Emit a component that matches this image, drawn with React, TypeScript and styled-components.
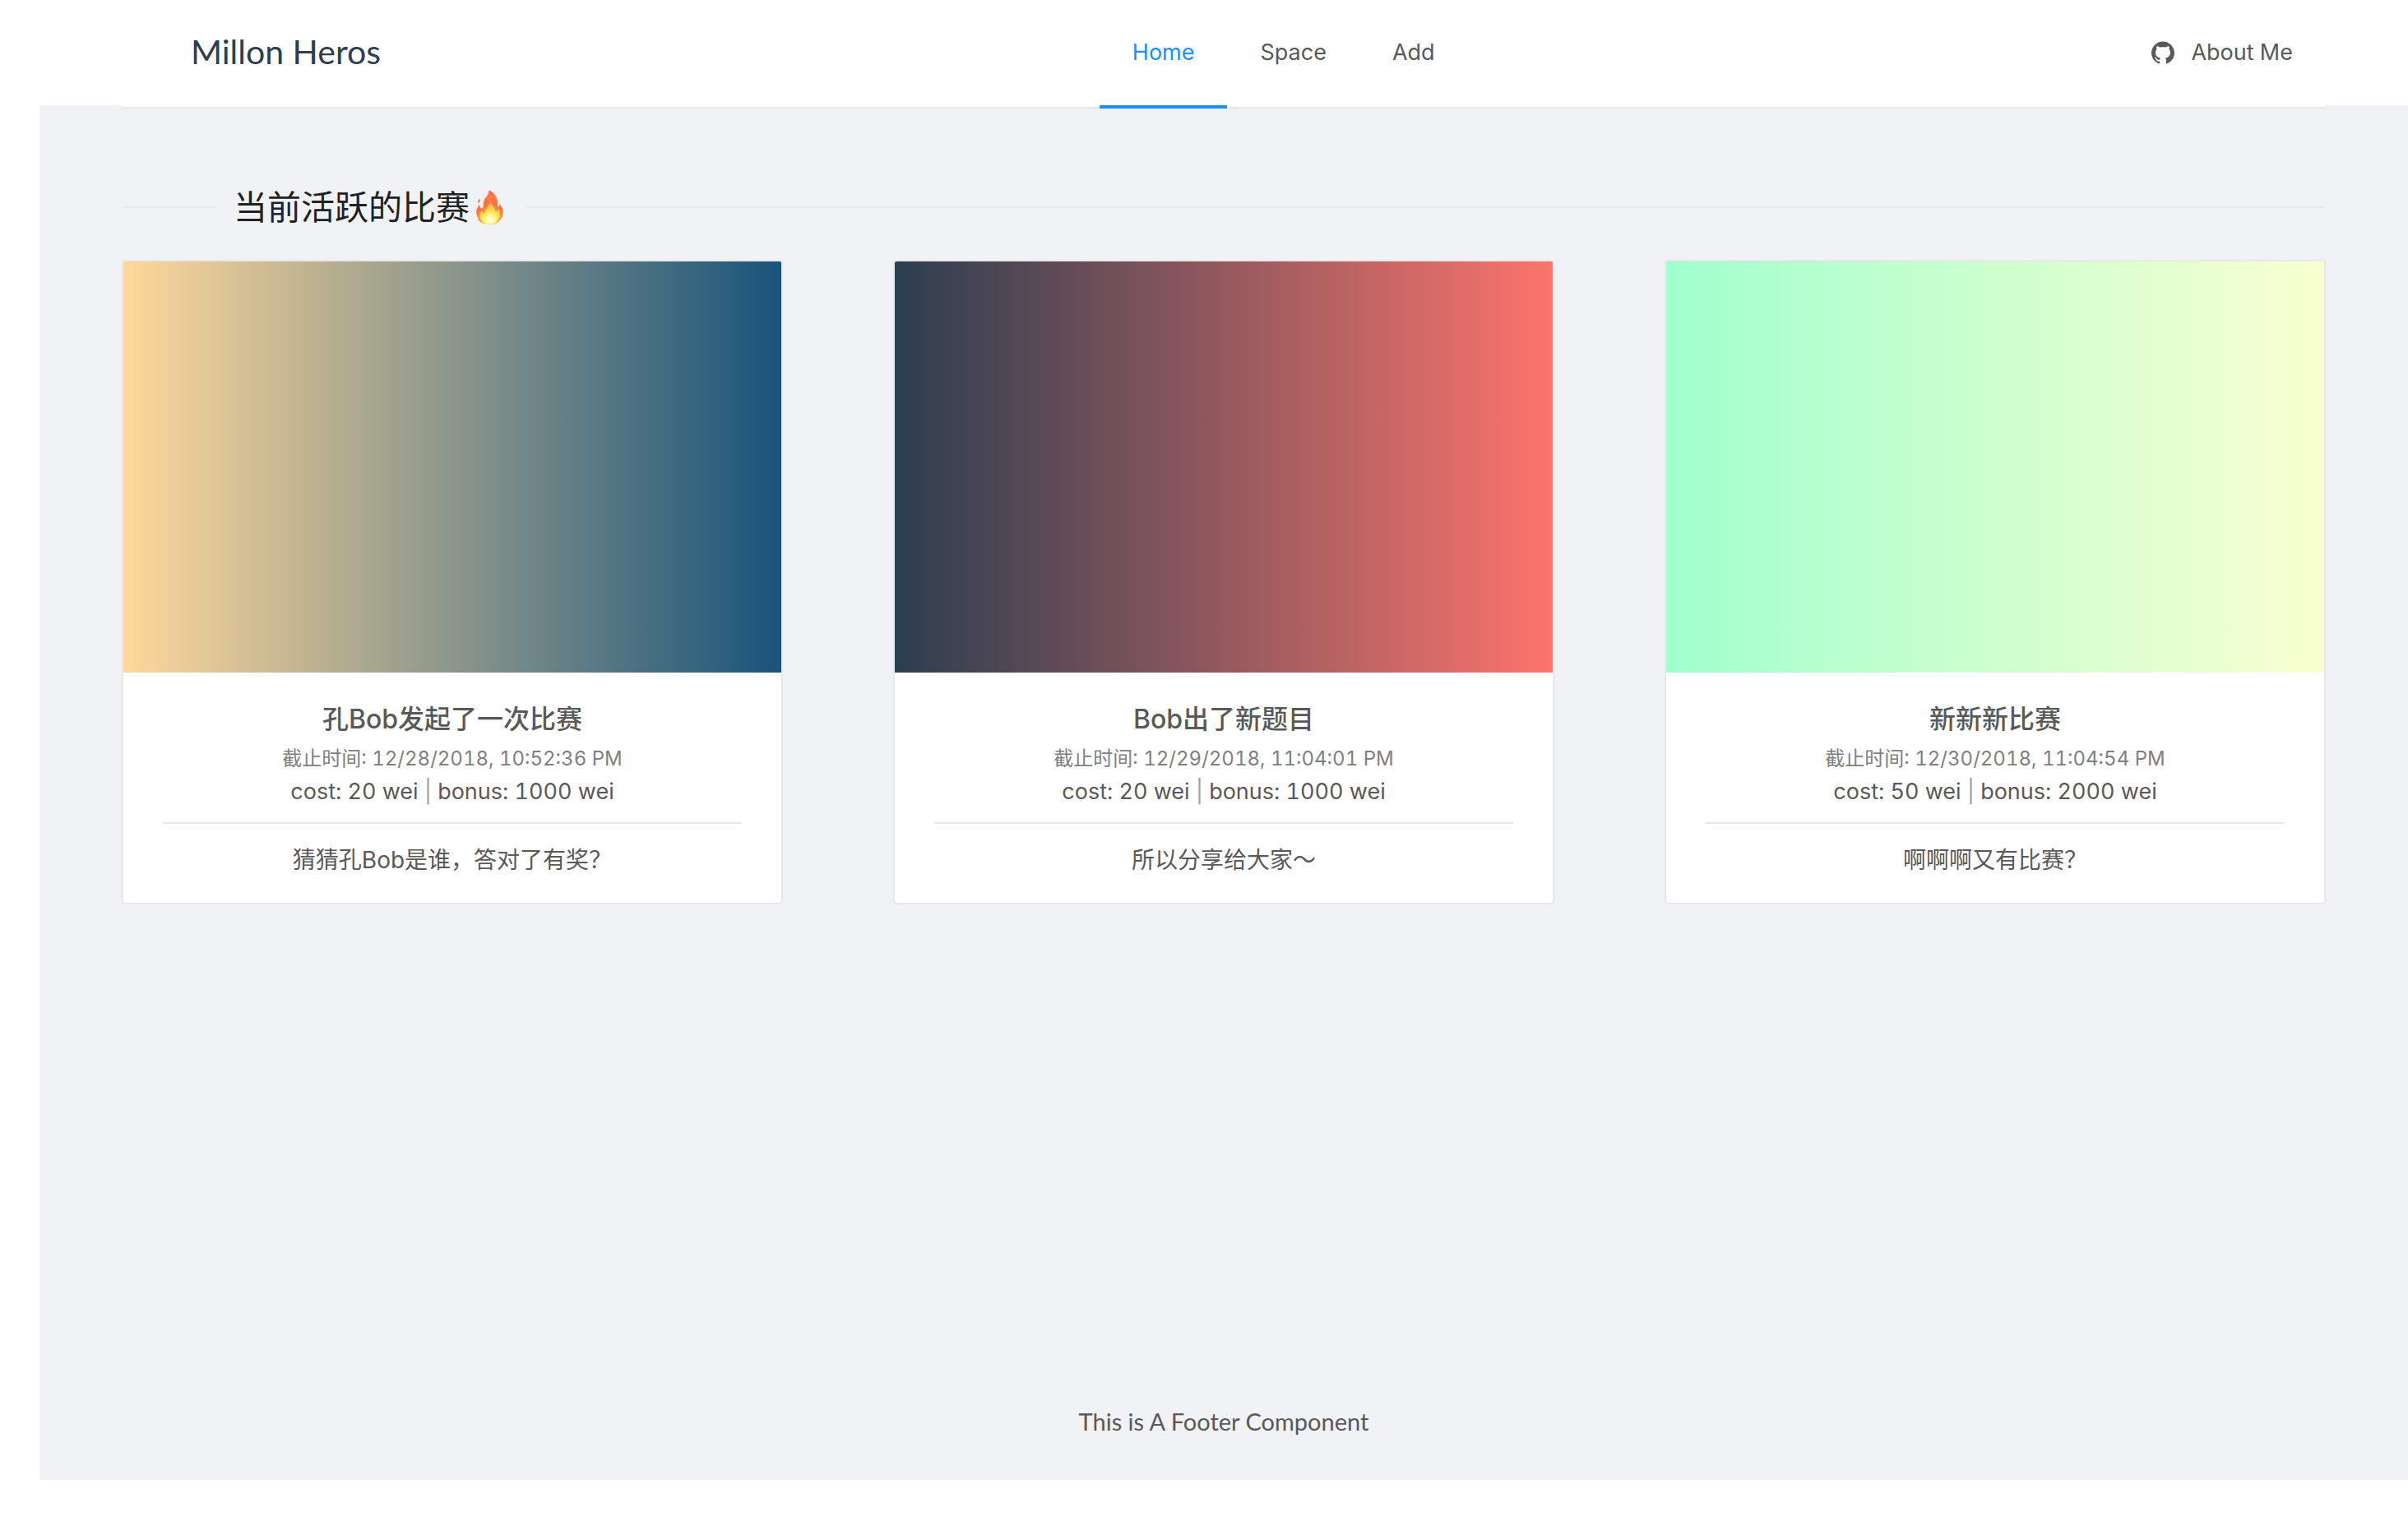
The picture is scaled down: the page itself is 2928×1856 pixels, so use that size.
import React from "react";
import styled, { createGlobalStyle } from "styled-components";
import { AiFillGithub } from "react-icons/ai";

const sans = `Inter, "Noto Sans CJK SC", "Liberation Sans", sans-serif`;

const GlobalStyle = createGlobalStyle`
  *, *::before, *::after { box-sizing: border-box; }
  body {
    margin: 0;
    background: #fff;
    color: #595959;
    font: 28px/42px ${sans};
    font-variant-numeric: tabular-nums;
  }
  h1, h2, h3, p { margin: 0; font-weight: 400; }
  a { color: inherit; text-decoration: none; }
`;

const Page = styled.div`
  display: flex;
  flex-direction: column;
  min-height: 100vh;
  padding-bottom: 56px;
`;

const Header = styled.header`
  height: 128px;
  padding: 0 100px 0 148px;
  background: #fff;
`;

const Menu = styled.div`
  position: relative;
  display: flex;
  justify-content: space-between;
  height: 132px;
  background: #fff;
  border-bottom: 2px solid #e8e8e8;
`;

const Logo = styled.h1`
  padding: 0 84px;
  color: #2c3e50;
  font: 400 41px/126px Lato, sans-serif;
`;

const Nav = styled.nav`
  display: flex;
`;

const NavLink = styled.a<{ $active?: boolean }>`
  display: flex;
  align-items: center;
  gap: 18px;
  height: 132px;
  padding: 0 40px;
  border-bottom: 4px solid ${(p) => (p.$active ? "#1890ff" : "transparent")};
  color: ${(p) => (p.$active ? "#1890ff" : "#595959")};
  font-size: 27px;
`;

const Main = styled.main`
  display: flex;
  flex: 1;
  flex-direction: column;
  margin-left: 48px;
  padding: 92px 100px 50px;
  background: #f0f2f5;
`;

const SectionTitle = styled.h2`
  display: flex;
  align-items: center;
  gap: 22px;
  margin-bottom: 32px;
  color: #222;
  font-size: 41px;
  line-height: 64px;

  &::before,
  &::after {
    content: "";
    height: 2px;
    background: #e8e8e8;
  }
  &::before { width: 114px; }
  &::after { flex: 1; }
`;

const TitleText = styled.span`
  display: flex;
  align-items: center;
  gap: 8px;
  padding-right: 6px;
`;

const CardGrid = styled.section`
  display: grid;
  grid-template-columns: repeat(3, 30%);
  justify-content: space-between;
`;

const Card = styled.article`
  overflow: hidden;
  background: #fff;
  border: 2px solid #e8e8e8;
  border-radius: 4px;
  text-align: center;
`;

const Cover = styled.div<{ $from: string; $to: string }>`
  height: 500px;
  background: linear-gradient(to right, ${(p) => p.$from}, ${(p) => p.$to});
`;

const CardBody = styled.div`
  padding: 32px 48px;
`;

const CardTitle = styled.h3`
  font-size: 32px;
  font-weight: 500;
  line-height: 50px;
`;

const Deadline = styled.p`
  color: #808080;
  font-size: 24px;
  line-height: 46px;
`;

const Stakes = styled.p`
  font-size: 27px;
  line-height: 34px;
`;

const Bar = styled.span`
  color: #a89c9c;
`;

const Rule = styled.hr`
  height: 2px;
  margin: 20px 0 24px;
  border: 0;
  background: #e8e8e8;
`;

const Description = styled.p`
  line-height: 40px;
`;

const Footer = styled.footer`
  margin-top: auto;
  font-family: Lato, sans-serif;
  font-size: 29px;
  text-align: center;
`;

interface Contest {
  title: string;
  deadline: string;
  cost: number;
  bonus: number;
  description: string;
  from: string;
  to: string;
}

const contests: Contest[] = [
  { title: "孔Bob发起了一次比赛", deadline: "12/28/2018, 10:52:36 PM", cost: 20, bonus: 1000, description: "猜猜孔Bob是谁，答对了有奖？", from: "#ffd89b", to: "#19547b" },
  { title: "Bob出了新题目", deadline: "12/29/2018, 11:04:01 PM", cost: 20, bonus: 1000, description: "所以分享给大家～", from: "#2c3e50", to: "#fd746c" },
  { title: "新新新比赛", deadline: "12/30/2018, 11:04:54 PM", cost: 50, bonus: 2000, description: "啊啊啊又有比赛？", from: "#a1ffce", to: "#faffd1" },
];

function Flame() {
  return (
    <svg width="33" height="42" viewBox="0 0 33 42" role="img" aria-label="fire">
      <defs>
        <radialGradient id="flame-outer" gradientUnits="userSpaceOnUse" cx="17" cy="36" r="36">
          <stop offset="0" stopColor="#ffe94f" />
          <stop offset="0.3" stopColor="#ffae38" />
          <stop offset="0.5" stopColor="#ff7040" />
          <stop offset="0.8" stopColor="#ff7a4a" />
          <stop offset="1" stopColor="#f8604a" />
        </radialGradient>
        <radialGradient id="flame-inner" gradientUnits="userSpaceOnUse" cx="17" cy="37" r="24">
          <stop offset="0" stopColor="#fffff0" />
          <stop offset="0.25" stopColor="#fff88a" />
          <stop offset="0.5" stopColor="#ffe04c" />
          <stop offset="0.8" stopColor="#ffb552" />
          <stop offset="1" stopColor="#ff9a55" stopOpacity="0" />
        </radialGradient>
      </defs>
      <path fill="url(#flame-outer)" d="M15.5 0C21 3 26 8 26 14.500C26 17 25.500 19 26.500 21C27.800 20.500 28.500 19 28.500 17C31 19.500 33 24 32.500 29C32 35.500 27 41.500 17.500 42C12 42 6 40.500 3.500 37.500L1.500 35.500L3 35C1 32 0 29.500 .3 26C.6 22.500 2.500 20.500 3.500 18C4.500 20 5 21.500 6.500 23C9 21 9.200 18.500 9 15.500C8.800 9 16.500 7 15.500 0Z" />
      <path fill="#ff7645" d="M4.500 10.500C5.200 12.500 4.500 15 2.500 16.500C1.500 14.500 2.500 12 4.500 10.500Z" />
      <path fill="url(#flame-inner)" d="M17.500 13C18.500 18 23 21 23.500 27C25.500 26.500 26.500 24.500 27 22.500C29.500 27 29.500 33 26.500 37C24 40 20.500 41.500 16.500 41.500C9 41.500 4 37 4.500 30.500C4.700 28.500 5.500 27 6.500 25.500C7.500 28 8.500 29 10.500 29.500C11 25 15 19 17.500 13Z" />
    </svg>
  );
}

export default function App() {
  return (
    <Page>
      <GlobalStyle />
      <Header>
        <Menu>
          <Logo>Millon Heros</Logo>
          <Nav aria-label="Main">
            <NavLink href="#home" $active aria-current="page">Home</NavLink>
            <NavLink href="#space">Space</NavLink>
            <NavLink href="#add">Add</NavLink>
          </Nav>
          <NavLink href="#about">
            <AiFillGithub size={32} aria-hidden />
            About Me
          </NavLink>
        </Menu>
      </Header>
      <Main>
        <SectionTitle>
          <TitleText>
            当前活跃的比赛
            <Flame />
          </TitleText>
        </SectionTitle>
        <CardGrid>
          {contests.map((c) => (
            <Card key={c.title}>
              <Cover $from={c.from} $to={c.to} />
              <CardBody>
                <CardTitle>{c.title}</CardTitle>
                <Deadline>截止时间: {c.deadline}</Deadline>
                <Stakes>
                  cost: {c.cost} wei <Bar>|</Bar> bonus: {c.bonus} wei
                </Stakes>
                <Rule />
                <Description>{c.description}</Description>
              </CardBody>
            </Card>
          ))}
        </CardGrid>
        <Footer>This is A Footer Component</Footer>
      </Main>
    </Page>
  );
}
